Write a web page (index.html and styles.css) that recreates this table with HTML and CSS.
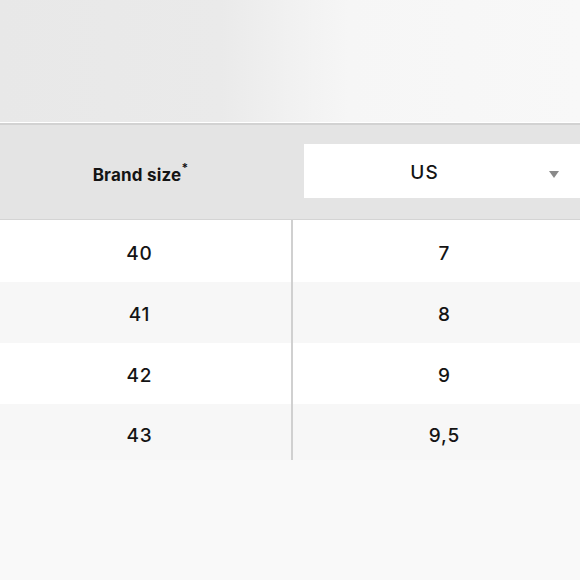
FILE: index.html
```html
<!DOCTYPE html>
<html>
<head>
<meta charset="utf-8">
<link rel="stylesheet" href="styles.css">
</head>
<body>
<div class="hero"></div>
<div class="size-table">
  <div class="thead">
    <div class="th th-brand">Brand size<sup>*</sup></div>
    <div class="th th-select">
      <div class="select">
        <span class="select-label">US</span>
        <span class="select-arrow"></span>
      </div>
    </div>
  </div>
  <div class="row row-first">
    <div class="cell cell-left">40</div>
    <div class="cell">7</div>
  </div>
  <div class="row row-alt">
    <div class="cell cell-left">41</div>
    <div class="cell">8</div>
  </div>
  <div class="row">
    <div class="cell cell-left">42</div>
    <div class="cell">9</div>
  </div>
  <div class="row row-alt row-last">
    <div class="cell cell-left">43</div>
    <div class="cell">9,5</div>
  </div>
</div>
<div class="footer-space"></div>
</body>
</html>
```
FILE: styles.css
```css
html, body {
  margin: 0;
  padding: 0;
}
body {
  background: #f9f9f9;
  font-family: Inter, "Open Sans", sans-serif;
  color: #141414;
  overflow: hidden;
  width: 580px;
  height: 580px;
}
.hero {
  height: 122px;
  background: linear-gradient(90deg, #e8e8e8 0%, #eaeaea 38%, #f1f1f1 50%, #f6f6f6 60%, #f8f8f8 100%);
  border-bottom: 1px solid #ffffff;
}
.size-table {
  width: 608px;
  margin-left: -12px;
}
.thead {
  display: flex;
  background: #e4e4e4;
  border-top: 2px solid #d2d2d2;
  border-bottom: 1px solid #d4d4d4;
  height: 94px;
}
.th {
  display: flex;
  align-items: center;
  justify-content: center;
}
.th-brand {
  width: 305px;
  font-weight: 700;
  font-size: 17px;
  letter-spacing: 0.2px;
  padding-top: 6px;
  box-sizing: border-box;
}
.th-brand sup {
  font-size: 12px;
  line-height: 0;
  position: relative;
  top: -7px;
  margin-left: 0;
}
.th-select {
  width: 303px;
  box-sizing: border-box;
  padding: 19px 11px 21px 11px;
  justify-content: flex-start;
  align-items: stretch;
}
.select {
  position: relative;
  width: 281px;
  background: #ffffff;
  display: flex;
  align-items: center;
  justify-content: center;
  padding-right: 40px;
  padding-top: 3px;
  box-sizing: border-box;
  font-size: 19px;
  font-weight: 500;
  letter-spacing: 1.2px;
}
.select-arrow {
  position: absolute;
  right: 26px;
  top: 27px;
  width: 0;
  height: 0;
  border-left: 5.5px solid transparent;
  border-right: 5.5px solid transparent;
  border-top: 7px solid #8a8a8a;
}
.row {
  display: flex;
  height: 61px;
  background: #ffffff;
}
.row-first {
  height: 62px;
}
.row-alt {
  background: #f7f7f7;
}
.row-last {
  height: 56px;
}
.cell {
  flex: 1;
  display: flex;
  align-items: center;
  justify-content: center;
  font-size: 19px;
  letter-spacing: 0.9px;
  font-weight: 500;
  padding-top: 4px;
  box-sizing: border-box;
}
.row-last .cell {
  padding-top: 6px;
}
.cell-left {
  flex: 0 0 305px;
  border-right: 2px solid #d0d0d0;
}
.footer-space {
  height: 120px;
  background: #f9f9f9;
}
```
